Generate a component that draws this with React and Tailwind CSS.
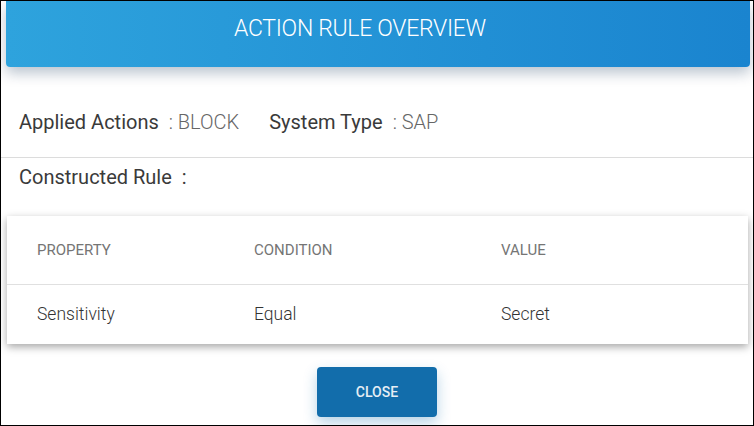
export default function App() {

    const rows = [
        { property: 'Sensitivity', condition: 'Equal', value: 'Secret' },
    ];

    return (
        <div className="w-[754px] h-[426px] border border-black bg-white overflow-hidden font-['Roboto',sans-serif]">
            {/* Title bar */}
            <div className="ml-[5px] mr-[3px] h-[66px] rounded-b-[4px] bg-gradient-to-r from-[#2ea3dd] to-[#1a84cf] shadow-[0_6px_14px_rgba(0,40,80,0.28)] flex items-center justify-center pr-[36px]">
                <h1 className="text-white text-[23px] font-light tracking-[-0.3px] -mt-[10px]">ACTION RULE OVERVIEW</h1>
            </div>

            {/* Summary */}
            <div className="pt-[41px] pb-[21px] px-[18px] flex items-center text-[20px] leading-[28px]">
                <span className="text-[#3a3a3a]">Applied Actions</span>
                <span className="ml-[10px] text-[#666] font-light">: BLOCK</span>
                <span className="ml-[30px] text-[#3a3a3a]">System Type</span>
                <span className="ml-[10px] text-[#666] font-light">: SAP</span>
            </div>
            <div className="border-t border-[#dcdcdc]" />

            <div className="pt-[5px] px-[18px] text-[20px] leading-[28px] text-[#3a3a3a]">
                Constructed Rule<span className="ml-[10px]">:</span>
            </div>

            {/* Rule table */}
            <div className="mt-[25px] ml-[6px] mr-[5px] bg-white shadow-[0_3px_8px_rgba(0,0,0,0.35)]">
                <div className="grid grid-cols-[217px_247px_1fr] px-[30px] h-[69px] items-center border-b border-[#e0e0e0] text-[15px] text-[#757575]">
                    <div>PROPERTY</div>
                    <div>CONDITION</div>
                    <div>VALUE</div>
                </div>
                {rows.map((r) => (
                    <div key={r.property} className="grid grid-cols-[217px_247px_1fr] px-[30px] h-[59px] items-center text-[17.5px] font-light text-[#333]">
                        <div>{r.property}</div>
                        <div>{r.condition}</div>
                        <div>{r.value}</div>
                    </div>
                ))}
            </div>

            <div className="mt-[23px] flex justify-center">
                <button className="w-[120px] h-[50px] rounded-[4px] bg-[#126dab] text-[#e6eef5] text-[14px] font-medium shadow-[0_6px_14px_rgba(18,109,171,0.3)]">
                    CLOSE
                </button>
            </div>
        </div>
    );
}
